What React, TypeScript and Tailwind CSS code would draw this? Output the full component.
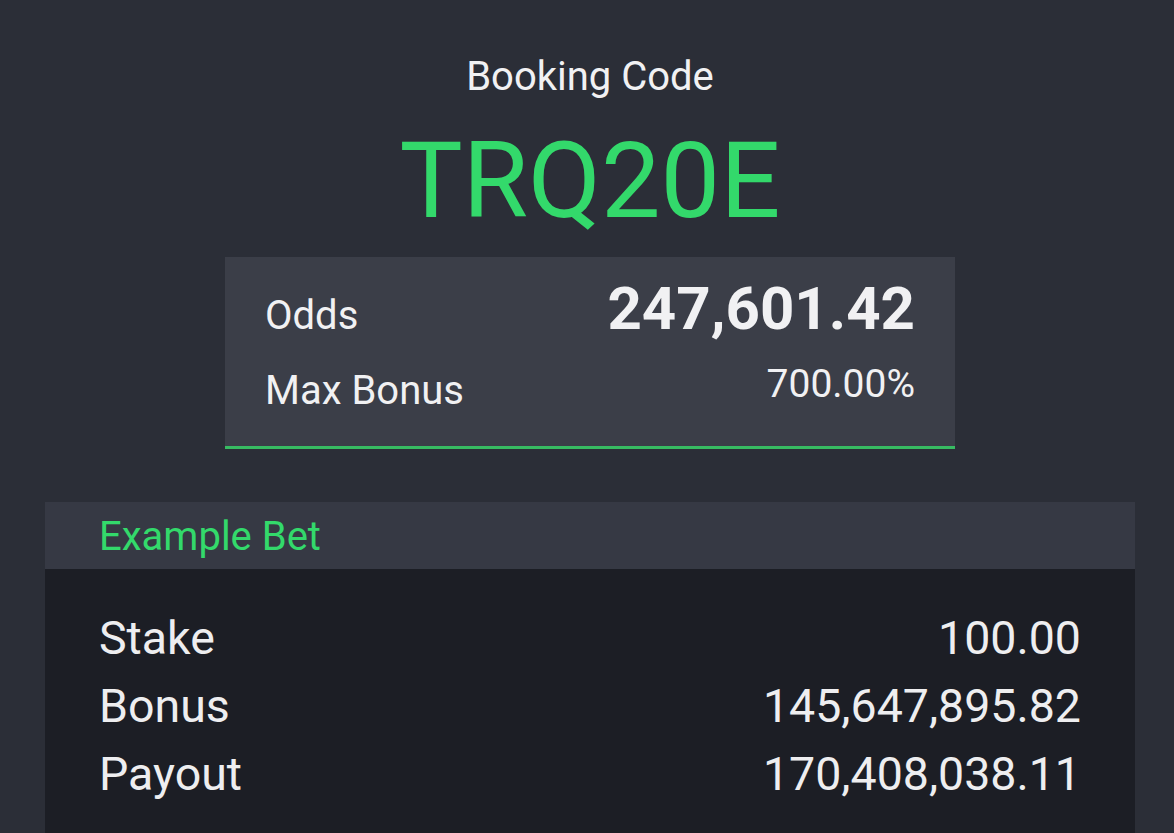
export default function App() {
  const rows = [
    { label: "Stake", value: "100.00" },
    { label: "Bonus", value: "145,647,895.82" },
    { label: "Payout", value: "170,408,038.11" },
  ];

  return (
    <div
      className="min-h-[833px] h-[833px] overflow-hidden bg-[#2b2e37] pl-[6px] flex flex-col items-center"
      style={{ fontFamily: "Roboto, 'Noto Sans', sans-serif" }}
    >
      <div className="mt-[57px] text-[40px] leading-none text-[#f1f1f3]">Booking Code</div>
      <div className="mt-[31px] text-[106px] leading-none text-[#33d96b]">TRQ20E</div>

      <div className="mt-[23px] w-[730px] bg-[#3b3e48] border-b-[3px] border-[#37bb62] px-[40px] pt-[22px] pb-[35px] text-[#f1f1f3]">
        <div className="flex items-baseline justify-between">
          <span className="text-[40px] leading-none">Odds</span>
          <span className="text-[60px] leading-none font-bold">247,601.42</span>
        </div>
        <div className="mt-[32px] flex items-start justify-between">
          <span className="text-[40px] leading-none">Max Bonus</span>
          <span className="-mt-[6px] text-[39px] leading-none">700.00%</span>
        </div>
      </div>

      <div className="mt-[53px] w-[1090px]">
        <div className="h-[67px] bg-[#363944] px-[54px] pt-[2px] flex items-center">
          <span className="text-[40px] leading-none text-[#33d96b]">Example Bet</span>
        </div>
        <div className="bg-[#1c1e25] px-[54px] pt-[35px] pb-[40px] text-[#eeeef0]">
          {rows.map((r) => (
            <div key={r.label} className="flex justify-between text-[46.5px] leading-[68px]">
              <span>{r.label}</span>
              <span>{r.value}</span>
            </div>
          ))}
        </div>
      </div>
    </div>
  );
}
